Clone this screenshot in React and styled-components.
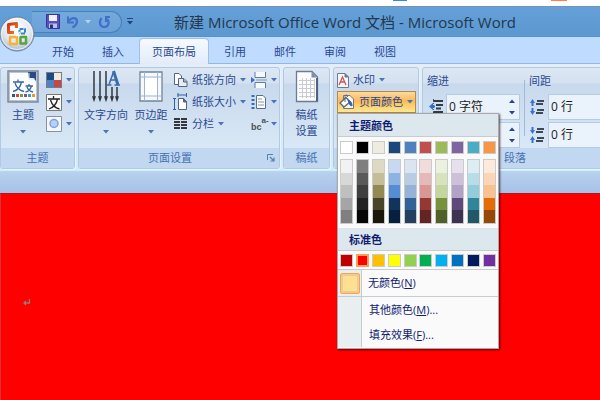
import styled, { createGlobalStyle } from 'styled-components'

const GlobalStyle = createGlobalStyle`
    * {
        box-sizing: border-box;
    }
    body {
        margin: 0;
        overflow: hidden;
        font-family: "Open Sans", "Noto Sans CJK SC", sans-serif;
        font-size: 11px;
        line-height: 16px;
        color: #28488f;
    }
    button, input {
        font: inherit;
        color: inherit;
        margin: 0;
        padding: 0;
        border: 0;
        background: none;
    }
    svg {
        display: block;
        flex: none;
    }
`
const Window = styled.div`
    min-height: 100vh;
    display: flex;
    flex-direction: column;
    position: relative;
`
const TopStrip = styled.div`
    height: 7px;
    background-color: #fff;
    border-bottom: solid 1px #6f93b5;
    position: relative;
`
const StripMark = styled.span`
    position: absolute;
    top: 0;
    left: ${props => props.$left};
    width: ${props => props.$width}px;
    height: 1px;
    background-color: ${props => props.$color};
`
const TitleBar = styled.header`
    height: 30px;
    display: flex;
    align-items: center;
    padding-left: 32px;
    background: linear-gradient(#65a0d8, #5c98d0);
    border-bottom: solid 1px #5a92cb;
`
const QuickAccess = styled.div`
    width: 90px;
    height: 22px;
    display: flex;
    align-items: center;
    gap: 7px;
    padding-left: 14px;
    border: solid 1px #4880b8;
    border-left: 0;
    border-radius: 0 11px 11px 0;
    background: linear-gradient(#74a9dc, #6ba1d6);
`
const QuickButton = styled.button`
    display: flex;
    align-items: center;
    gap: 6px;
`
const MoreButton = styled.button`
    width: 16px;
    display: flex;
    justify-content: center;
`
const Title = styled.h1`
    margin: 0 0 0 36px;
    font-size: 15px;
    line-height: 22px;
    font-weight: normal;
    white-space: nowrap;
    color: #23374d;
`
const OfficeButton = styled.button`
    position: absolute;
    top: 15px;
    left: 0;
    width: 35px;
    height: 37px;
`
const Tabs = styled.nav`
    height: 27px;
    display: flex;
    align-items: flex-end;
    gap: 4px;
    padding-left: 40px;
    background-color: #bfdbff;
    border-bottom: solid 1px #94b7e2;
`
const Tab = styled.button`
    height: 26px;
    padding: 0 12px;
    white-space: nowrap;
    margin-bottom: -1px;
    border: solid 1px ${props => props.$active ? "#9fc0e8" : "transparent"};
    border-width: 1px 0 0;
    border-radius: 4px 4px 0 0;
    background: ${props => props.$active ? "linear-gradient(#f6faff, #e2ecf8)" : "none"};
    box-shadow: ${props => props.$active ? "-1px 0 0 #9fc0e8, 1px 0 0 #9fc0e8" : "none"};
`
const Ribbon = styled.main`
    display: flex;
    gap: 3px;
    padding: 3px 0 2px;
    background: linear-gradient(#e4edf8, #d3eaf8);
    border-bottom: solid 1px #a9dcf0;
`
const StyledGroup = styled.section`
    width: ${props => props.$width ? props.$width + "px" : "auto"};
    flex: ${props => props.$width ? "none" : "1 0 auto"};
    display: flex;
    flex-direction: column;
    border: solid 1px #b0cae6;
    border-radius: 3px;
    box-shadow: 1px 1px 0 #eaf3fc;
    background: linear-gradient(#dde7f4, #d5e1f0 15px, #c8d9ed 16px, #d9e8f6 80px);
`
const GroupBody = styled.div`
    height: 80px;
    display: flex;
    justify-content: ${props => props.$center ? "center" : "flex-start"};
    padding: 1px 0 0 ${props => props.$indent || 0}px;
`
const GroupLabel = styled.h2`
    margin: 0;
    height: 20px;
    display: flex;
    align-items: center;
    justify-content: ${props => props.$launcher ? "space-between" : "center"};
    padding: 0 4px 0 ${props => props.$indent || 4}px;
    font-size: 11px;
    font-weight: normal;
    line-height: 20px;
    color: #4670b3;
    background-color: #c1d8f0;
`
const BigButton = styled.button`
    width: ${props => props.$width}px;
    height: 72px;
    display: flex;
    flex-direction: column;
    align-items: center;
    white-space: nowrap;
    padding-top: 1px;
    svg + span {
        margin-top: 4px;
    }
    span + svg {
        margin-top: 7px;
    }
`
const Column = styled.div`
    display: flex;
    flex-direction: column;
    margin-left: ${props => props.$left || 0}px;
`
const SmallButton = styled.button`
    height: 22px;
    display: flex;
    align-items: center;
    gap: 4px;
    white-space: nowrap;
`
const Anchor = styled.div`
    position: relative;
`
const ColorButton = styled(SmallButton)`
    width: 79px;
    padding-left: 1px;
    border: solid 1px #b58a44;
    background: linear-gradient(#fcd9a0, #fbb957 45%, #fdd26e 70%, #ffe793);
`
const Paragraph = styled.div`
    display: flex;
    gap: 4px;
    padding: 3px 0 0 4px;
`
const FieldColumn = styled.fieldset`
    margin: 0;
    padding: 0;
    border: 0;
    min-width: 0;
    display: flex;
    flex-direction: column;
    gap: 2px;
    legend {
        padding: 0;
        height: 22px;
        line-height: 18px;
    }
`
const Field = styled.label`
    display: flex;
    align-items: center;
    gap: 3px;
`
const SpinBox = styled.span`
    width: 74px;
    height: 26px;
    display: flex;
    align-items: center;
    justify-content: space-between;
    padding: 0 4px 0 2px;
    border: solid 1px #b4cbe8;
    background-color: #eaf2fc;
    input {
        width: 50px;
        font-size: 12px;
        color: #1b1b1b;
    }
`
const Divider = styled.div`
    width: 1px;
    height: 56px;
    margin-top: 8px;
    background-color: #9dbbdf;
`
const Workspace = styled.div`
    flex: 1;
    display: flex;
    flex-direction: column;
    padding-top: 21px;
    background: linear-gradient(#b9d0ee, #a5c1e8 22px);
`
const Page = styled.article`
    flex: 1;
    padding: 105px 22px;
    background-color: #fe0000;
    border-left: solid 1px #d83040;
    border-top: solid 1px #b0181c;
`
const Menu = styled.div`
    position: absolute;
    z-index: 2;
    top: 22px;
    left: 0;
    width: 162px;
    padding-bottom: 1px;
    border: solid 1px #a5a9ad;
    background-color: #fafafa;
    box-shadow: 1px 1px 2px rgba(40, 0, 0, 0.7);
    color: #101c70;
`
const MenuHeading = styled.h3`
    margin: 0;
    height: 23px;
    padding-left: 11px;
    font-size: 11px;
    line-height: 24px;
    background-color: #dde7ee;
    border-bottom: solid 1px #c8cbd0;
`
const ThemeSwatches = styled.div`
    padding: 1px 0 2px;
`
const SwatchRow = styled.div`
    display: flex;
    justify-content: space-between;
    padding: 3px 2px 2px;
`
const Swatch = styled.button`
    width: 13px;
    height: 13px;
    border: solid ${props => props.$selected ? "2px #f5a45a" : "1px #c9ccca"};
    background-color: ${props => props.$color};
`
const Shades = styled.div`
    width: 13px;
    height: 65px;
    display: flex;
    flex-direction: column;
    border: solid 1px #c9ccca;
`
const Shade = styled.button`
    flex: 1;
    background-color: ${props => props.$color};
`
const MenuSection = styled.div`
    border-top: solid 1px #c9cccf;
    background: linear-gradient(90deg, #e9eef0 23px, #c8cccf 23px, #c8cccf 24px, #fafafa 24px);
`
const MenuItem = styled.button`
    width: 100%;
    height: ${props => props.$chip ? 26 : 25}px;
    display: flex;
    align-items: center;
    padding-left: ${props => props.$chip ? 2 : 31}px;
    gap: 8px;
    white-space: nowrap;
`
const Chip = styled.span`
    width: 20px;
    height: 21px;
    border: solid 1px #f5a650;
    border-radius: 2px;
    background-color: #ffe093;
    box-shadow: inset 0 0 0 1px #fbc987, inset 0 0 0 2px #e0d0a0;
`

const Arrow = ({ up, color = "#4a74b5" }) => (
    <svg width="6" height="4" viewBox="0 0 6 4">
        <path d={up ? "M0 4L3 0.5L6 4Z" : "M0 0L3 3.5L6 0Z"} fill={color} />
    </svg>
)

const OfficeLogo = () => (
    <svg width="35" height="37" viewBox="0 0 35 37">
        <defs>
            <radialGradient id="orb" cx="50%" cy="35%" r="65%">
                <stop offset="0" stopColor="#fff" />
                <stop offset="0.6" stopColor="#e3e8ee" />
                <stop offset="1" stopColor="#a9b7c9" />
            </radialGradient>
            <linearGradient id="red" x2="1" y2="1"><stop stopColor="#c7361c" /><stop offset="1" stopColor="#f6761e" /></linearGradient>
        </defs>
        <circle cx="17" cy="19" r="17" fill="url(#orb)" stroke="#657fa5" strokeWidth="1" />
        <circle cx="17" cy="19" r="15.5" fill="none" stroke="#fff" opacity="0.7" />
        <g fill="none" strokeLinejoin="round">
            <path d="M14 17.500H8.500V9.500L16.500 8.500V13" stroke="url(#red)" strokeWidth="3" />
            <path d="M19.500 14H25V18.500H19.500Z" stroke="#3685cf" strokeWidth="2" strokeDasharray="4 1" />
            <path d="M10 22H17V29H10Z" stroke="#f4b335" strokeWidth="2.500" />
            <path d="M20.500 22H26V28.500H20.500Z" stroke="#57a53b" strokeWidth="2.500" />
            <path d="M16 17L20 21M16 21L20 17" stroke="#f7fafc" strokeWidth="1.500" />
        </g>
    </svg>
)

const SaveIcon = () => (
    <svg width="14" height="15" viewBox="0 0 14 15">
        <path d="M0.500 0.500H13.500V14.500H2L0.500 13Z" fill="#5650ba" stroke="#37349a" />
        <path d="M3 1H11V7H3Z" fill="#eef1fb" />
        <path d="M3 9.500H11V14H3Z" fill="#b9c1e8" />
        <path d="M4 10.500H7V14H4Z" fill="#303078" />
    </svg>
)

const UndoIcon = () => (
    <svg width="12" height="14" viewBox="0 0 12 14">
        <path d="M2 6C5 1.500 10 2.500 10 6.500C10 9 8 11 5.500 12.500" fill="none" stroke="#416fc9" strokeWidth="2.200" />
        <path d="M1 1.500V7.500H7" fill="none" stroke="#416fc9" strokeWidth="2" />
    </svg>
)

const RedoIcon = () => (
    <svg width="13" height="14" viewBox="0 0 13 14">
        <path d="M3.500 3C0.500 7 2 12 6 12C10.500 12 12 7.500 9 4" fill="none" stroke="#416fc9" strokeWidth="2.200" />
        <path d="M7 2H12M8 2V7" fill="none" stroke="#416fc9" strokeWidth="2" />
    </svg>
)

const ThemeIcon = () => (
    <svg width="32" height="33" viewBox="0 0 32 33">
        <path d="M1 1H31V32H1Z" fill="#b9c4d3" stroke="#7f8b9d" strokeWidth="1.500" />
        <path d="M3 3H22L29 10V30H3Z" fill="#fcfdff" />
        <path d="M21 2H29V11L26 8H22Z" fill="#294b87" />
        <path d="M22 3V9H28" fill="none" stroke="#d9e4f5" />
        <g fill="none" stroke="#35669e" strokeWidth="1.300">
            <path d="M6 12H17M11 9.500V12M14.500 12C13.500 17 10 20.500 6 21.500M8 13C9.500 18 13 20.500 17 21.500" />
            <path d="M18.500 16H26M22 14V16M24.500 16C23.500 19.500 21 21.500 18.500 22M20 17C21 20 23.500 21.500 26 22" />
        </g>
        {["#2b5791", "#d34a45", "#69a342", "#7c51a1", "#37a3bd", "#f19435"].map((color, i) =>
            <rect key={color} x={5 + i * 4} y="24" width="3" height="3" fill={color} />
        )}
    </svg>
)

const PaletteIcon = () => (
    <svg width="16" height="16" viewBox="0 0 16 16">
        <path d="M0 0H16V16H0Z" fill="#767d86" />
        <path d="M1 1H8V8H1Z" fill="#194b85" /><path d="M8 1H15V8H8Z" fill="#eeecdf" />
        <path d="M1 8H8V15H1Z" fill="#4d83c2" /><path d="M8 8H15V15H8Z" fill="#c84744" />
    </svg>
)

const FontIcon = () => (
    <svg width="16" height="17" viewBox="0 0 16 17">
        <path d="M0.500 0.500H15.500V16.500H0.500Z" fill="#fafafa" stroke="#777" />
        <path d="M2 5H14M7.500 2V5M11.500 5C10.500 10 7 13.500 3 15M4.500 6C6 11 9 14 13.500 15" fill="none" stroke="#222" strokeWidth="1.300" />
    </svg>
)

const EffectIcon = () => (
    <svg width="16" height="16" viewBox="0 0 16 16">
        <path d="M0.500 0.500H15.500V15.500H0.500Z" fill="#f4f8fc" stroke="#86929e" />
        <circle cx="8" cy="7.500" r="4" fill="#b5d3fa" stroke="#7f9fe0" strokeWidth="1.500" />
    </svg>
)

const DirectionIcon = () => (
    <svg width="28" height="33" viewBox="0 0 28 33">
        <g stroke="#333840" strokeWidth="1.500" fill="#333840">
            {[2, 8, 14].map(x => <path key={x} d={`M${x} 1V28M${x - 1} 27H${x + 1}L${x} 30Z`} />)}
            {[20, 25].map(x => <path key={x} d={`M${x} 17V28M${x - 1} 27H${x + 1}L${x} 30Z`} />)}
        </g>
        <path d="M17 14.500L21.500 2" fill="none" stroke="#386cae" strokeWidth="1.500" />
        <path d="M21.500 1L26 15" fill="none" stroke="#386cae" strokeWidth="3" />
        <path d="M18 10H25M15 15H19.500M22.500 15H28" fill="none" stroke="#386cae" strokeWidth="1.700" />
    </svg>
)

const MarginIcon = () => (
    <svg width="24" height="33" viewBox="0 0 24 33">
        <path d="M1 2H23V31H1Z" fill="#f5f9ff" stroke="#73839c" strokeWidth="1.300" />
        <path d="M5.500 2V31M18.500 2V31M1 7H23M1 26H23" stroke="#a0b4d0" fill="none" />
        <path d="M6 8H18V25H6Z" fill="#fff" />
    </svg>
)

const PaperIcon = () => (
    <svg width="15" height="16" viewBox="0 0 15 16">
        <path d="M1.500 1.500H6L8.500 4V12.500H1.500Z" fill="#fff" stroke="#526680" />
        <path d="M5.500 6.500H11L14 9.500V14.500H5.500Z" fill="#e9eef5" stroke="#526680" />
        <path d="M10.500 6.500V10H14" fill="#9db0c9" stroke="#526680" />
    </svg>
)

const SizeIcon = () => (
    <svg width="15" height="18" viewBox="0 0 15 18">
        <path d="M5.500 5.500H10.500L13.500 8.500V16.500H5.500Z" fill="#fff" stroke="#53657d" />
        <path d="M10.500 5V9H14" fill="#526a8b" stroke="#53657d" />
        <path d="M4.500 2H14M5 0V4M13.500 0V4M1.500 6V16M0 5.500H3M0 16.500H3" fill="none" stroke="#335fa8" />
    </svg>
)

const ColumnsIcon = () => (
    <svg width="15" height="12" viewBox="0 0 15 12">
        <path d="M1 1H7M1 4H7M1 7H7M1 10H7M8 1H14M8 4H14M8 7H14M8 10H14" stroke="#34383e" strokeWidth="2" />
    </svg>
)

const BreakIcon = () => (
    <svg width="16" height="16" viewBox="0 0 16 16">
        <path d="M4 0V5.500H14.500V0M4 16V10.500H14.500V16" fill="#f5f8fc" stroke="#647b98" />
        <path d="M5 8H16" stroke="#8194ab" />
        <path d="M0 5L4 8L0 11Z" fill="#326cd0" />
    </svg>
)

const LineNumberIcon = () => (
    <svg width="16" height="16" viewBox="0 0 16 16">
        <path d="M5.500 1.500H12L14.500 4V14.500H5.500Z" fill="#fff" stroke="#5e6e84" />
        <path d="M7 5H11M7 8H13M7 11H13" stroke="#8493a8" />
        <path d="M2 1V15" stroke="#326cc0" strokeWidth="3" strokeDasharray="2 2" />
    </svg>
)

const Hyphen = styled.span`
    width: 16px;
    height: 16px;
    display: flex;
    align-items: flex-end;
    font: bold 9px/10px "Liberation Sans", sans-serif;
    color: #4a4f50;
    sup {
        align-self: flex-start;
        font-size: 8px;
        line-height: 10px;
    }
`

const ManuscriptIcon = () => (
    <svg width="24" height="33" viewBox="0 0 24 33">
        <path d="M1.500 1.500H17L22.500 7V31.500H1.500Z" fill="#fdfdff" stroke="#6d7b90" strokeWidth="1.300" />
        <path d="M22 8V31" stroke="#4e6381" strokeWidth="2" />
        <path d="M16.500 2V7.500H22Z" fill="#738eb4" />
        <path d="M4 10.500H20M4 14.500H20M4 18.500H20M4 22.500H20M4 26.500H20M7.500 8V28M11.500 8V28M15.500 8V28M19.500 9V28" stroke="#c9cbd0" fill="none" />
    </svg>
)

const WatermarkIcon = () => (
    <svg width="12" height="15" viewBox="0 0 12 15">
        <path d="M0.500 0.500H8L11.500 4V14.500H0.500Z" fill="#f5f7fb" stroke="#6d7b90" />
        <path d="M8 0.500V4H11.500" fill="#5f7594" stroke="#6d7b90" />
        <path d="M2 12L5.500 4L9 12M3.500 9H8" fill="none" stroke="#d0505a" strokeWidth="1.300" />
    </svg>
)

const BucketIcon = () => (
    <svg width="16" height="16" viewBox="0 0 16 16">
        <path d="M4.500 1.500H11L14.500 5V14.500H4.500Z" fill="#fff5dc" stroke="#6a7790" />
        <path d="M1 9L7 3.500L11 8L5 13Z" fill="#fff" stroke="#56677f" strokeWidth="1.300" />
        <path d="M6 8V2.500C6 0.500 8.500 0.500 8.500 3" fill="none" stroke="#56677f" />
        <path d="M9 6C12 7 13 9 13 12L11 11Z" fill="#2b62b5" stroke="#2b62b5" />
    </svg>
)

const IndentIcon = () => (
    <svg width="16" height="16" viewBox="0 0 16 16">
        <path d="M6 2H16M9 6H16M9 9.500H14M6 13H16" stroke="#303a4a" strokeWidth="2" />
        <path d="M2 7.500L6 4V6.500H8V8.500H6V11Z" fill="#326fd0" />
        <path d="M6.500 0V16" stroke="#4d5c70" strokeDasharray="1 1" />
    </svg>
)

const SpacingIcon = ({ after }) => (
    <svg width="16" height="18" viewBox="0 0 16 18">
        <path d="M8 3H15M7 6H14M8 12H15M7 15H14" stroke="#3f4857" strokeWidth="2" />
        <g fill="#3e70cf">
            <path d={after ? "M1 4H2.500V1H4.500V4H6L3.500 8Z" : "M1 5L3.500 1L6 5H4.500V8H2.500V5Z"} />
            <path d={after ? "M1 14L3.500 10L6 14H4.500V17H2.500V14Z" : "M1 13H2.500V10H4.500V13H6L3.500 17Z"} />
        </g>
    </svg>
)

const LauncherIcon = () => (
    <svg width="8" height="8" viewBox="0 0 8 8">
        <path d="M0.500 6V0.500H6" fill="none" stroke="#5b7fae" />
        <path d="M3 3L7 7M7 3.500V7H3.500" fill="none" stroke="#5b7fae" strokeWidth="1.200" />
    </svg>
)

const Spin = styled.span`
    display: flex;
    flex-direction: column;
    gap: 2px;
    button {
        height: 10px;
        display: flex;
        align-items: center;
    }
`

const themeColors = [
    ["#ffffff", "#f2f2f2", "#d8d8d8", "#bfbfbf", "#a5a5a5", "#7f7f7f"],
    ["#000000", "#7f7f7f", "#595959", "#3f3f3f", "#222222", "#060606"],
    ["#eeece1", "#ddd9c3", "#c4bd97", "#938953", "#494429", "#1b180a"],
    ["#1b477c", "#c6d9f0", "#8db3e2", "#548dd4", "#12335c", "#08203f"],
    ["#4f81bd", "#dbe5f1", "#b8cce4", "#95b3d7", "#336296", "#244061"],
    ["#c0504d", "#f2dcdb", "#e5b9b7", "#d99694", "#953734", "#632423"],
    ["#9bbb59", "#ebf1dd", "#d7e3bc", "#c3d69b", "#76923c", "#4f6128"],
    ["#8064a2", "#e5e0ec", "#ccc1d9", "#b2a2c7", "#5f497a", "#3f3151"],
    ["#4bacc6", "#dbeef3", "#b7dde8", "#92cddc", "#31859b", "#205867"],
    ["#f79646", "#fdeada", "#fbd5b5", "#fac08f", "#e36c09", "#974806"],
]
const standardColors = ["#c00000", "#ff0000", "#ffc000", "#ffff00", "#92d050", "#00b050", "#00b0f0", "#0070c0", "#001a60", "#7030a0"]
const tabs = ["开始", "插入", "页面布局", "引用", "邮件", "审阅", "视图"]

const Group = ({ label, width, indent, center, launcher, labelIndent, children }) => (
    <StyledGroup $width={width}>
        <GroupBody $indent={indent} $center={center}>{children}</GroupBody>
        <GroupLabel $launcher={launcher || labelIndent} $indent={labelIndent}>
            {label}
            {launcher && <button aria-label={label}><LauncherIcon /></button>}
        </GroupLabel>
    </StyledGroup>
)

const SpinField = ({ name, value, icon }) => (
    <Field>
        {icon}
        <SpinBox>
            <input type="text" aria-label={name} defaultValue={value} />
            <Spin>
                <button aria-label="+"><Arrow up color="#24468c" /></button>
                <button aria-label="-"><Arrow color="#24468c" /></button>
            </Spin>
        </SpinBox>
    </Field>
)

const ColorMenu = () => (
    <Menu>
        <MenuHeading>主题颜色</MenuHeading>
        <ThemeSwatches>
            <SwatchRow>
                {themeColors.map(([color]) => <Swatch key={color} $color={color} aria-label={color} />)}
            </SwatchRow>
            <SwatchRow>
                {themeColors.map(([color, ...shades]) => (
                    <Shades key={color}>
                        {shades.map(shade => <Shade key={shade} $color={shade} aria-label={shade} />)}
                    </Shades>
                ))}
            </SwatchRow>
        </ThemeSwatches>
        <MenuHeading>标准色</MenuHeading>
        <SwatchRow>
            {standardColors.map(color => (
                <Swatch key={color} $color={color} $selected={color === "#ff0000"} aria-label={color} />
            ))}
        </SwatchRow>
        <MenuSection>
            <MenuItem $chip><Chip /><span>无颜色(<u>N</u>)</span></MenuItem>
        </MenuSection>
        <MenuSection>
            <MenuItem><span>其他颜色(<u>M</u>)...</span></MenuItem>
            <MenuItem><span>填充效果(<u>F</u>)...</span></MenuItem>
        </MenuSection>
    </Menu>
)

const App = () => {
    return (
        <Window>
            <GlobalStyle />
            <TopStrip>
                <StripMark $left="393px" $width={14} $color="#2a8cf0" />
                <StripMark $left="551px" $width={16} $color="#ff8040" />
            </TopStrip>
            <TitleBar>
                <QuickAccess>
                    <QuickButton aria-label="保存"><SaveIcon /></QuickButton>
                    <QuickButton aria-label="撤消"><UndoIcon /><Arrow color="#b7d3f0" /></QuickButton>
                    <QuickButton aria-label="恢复"><RedoIcon /></QuickButton>
                </QuickAccess>
                <MoreButton aria-label="自定义">
                    <svg width="6" height="7" viewBox="0 0 6 7">
                        <path d="M0 0H6V1H0ZM0 3H6L3 6.500Z" fill="#1d4480" />
                    </svg>
                </MoreButton>
                <Title>新建 Microsoft Office Word 文档 - Microsoft Word</Title>
            </TitleBar>
            <Tabs>
                {tabs.map(tab => <Tab key={tab} $active={tab === "页面布局"}>{tab}</Tab>)}
            </Tabs>
            <OfficeButton aria-label="Office"><OfficeLogo /></OfficeButton>
            <Ribbon>
                <Group label="主题" width={75} indent={5}>
                    <BigButton $width={34}><ThemeIcon /><span>主题</span><Arrow /></BigButton>
                    <Column $left={6}>
                        <SmallButton aria-label="颜色"><PaletteIcon /><Arrow /></SmallButton>
                        <SmallButton aria-label="字体"><FontIcon /><Arrow /></SmallButton>
                        <SmallButton aria-label="效果"><EffectIcon /><Arrow /></SmallButton>
                    </Column>
                </Group>
                <Group label="页面设置" width={202} indent={2} launcher labelIndent={69}>
                    <BigButton $width={50}><DirectionIcon /><span>文字方向</span><Arrow /></BigButton>
                    <BigButton $width={40}><MarginIcon /><span>页边距</span><Arrow /></BigButton>
                    <Column $left={2}>
                        <SmallButton><PaperIcon />纸张方向<Arrow /></SmallButton>
                        <SmallButton><SizeIcon />纸张大小<Arrow /></SmallButton>
                        <SmallButton><ColumnsIcon />分栏<Arrow /></SmallButton>
                    </Column>
                    <Column $left={5}>
                        <SmallButton aria-label="分隔符"><BreakIcon /><Arrow /></SmallButton>
                        <SmallButton aria-label="行号"><LineNumberIcon /><Arrow /></SmallButton>
                        <SmallButton aria-label="断字"><Hyphen>bc<sup>a-</sup></Hyphen><Arrow /></SmallButton>
                    </Column>
                </Group>
                <Group label="稿纸" width={47} center>
                    <BigButton $width={40}><ManuscriptIcon /><span>稿纸<br />设置</span></BigButton>
                </Group>
                <Group label="" width={86} indent={3}>
                    <Column>
                        <SmallButton>
                            <WatermarkIcon />水印<Arrow />
                        </SmallButton>
                        <Anchor>
                            <ColorButton aria-expanded="true"><BucketIcon />页面颜色<Arrow /></ColorButton>
                            <ColorMenu />
                        </Anchor>
                    </Column>
                </Group>
                <Group label="段落" labelIndent={81}>
                    <Paragraph>
                        <FieldColumn>
                            <legend>缩进</legend>
                            <SpinField name="左" value="0 字符" icon={<IndentIcon />} />
                            <SpinField name="右" value="0 字符" icon={<IndentIcon />} />
                        </FieldColumn>
                        <Divider />
                        <FieldColumn>
                            <legend>间距</legend>
                            <SpinField name="段前" value="0 行" icon={<SpacingIcon />} />
                            <SpinField name="段后" value="0 行" icon={<SpacingIcon after />} />
                        </FieldColumn>
                    </Paragraph>
                </Group>
            </Ribbon>
            <Workspace>
                <Page>
                    <svg width="8" height="8" viewBox="0 0 8 8">
                        <path d="M6.500 0V4H1M3 2L1 4L3 6" fill="none" stroke="#8f8078" strokeWidth="1.300" />
                    </svg>
                </Page>
            </Workspace>
        </Window>
    )
}

export default App
